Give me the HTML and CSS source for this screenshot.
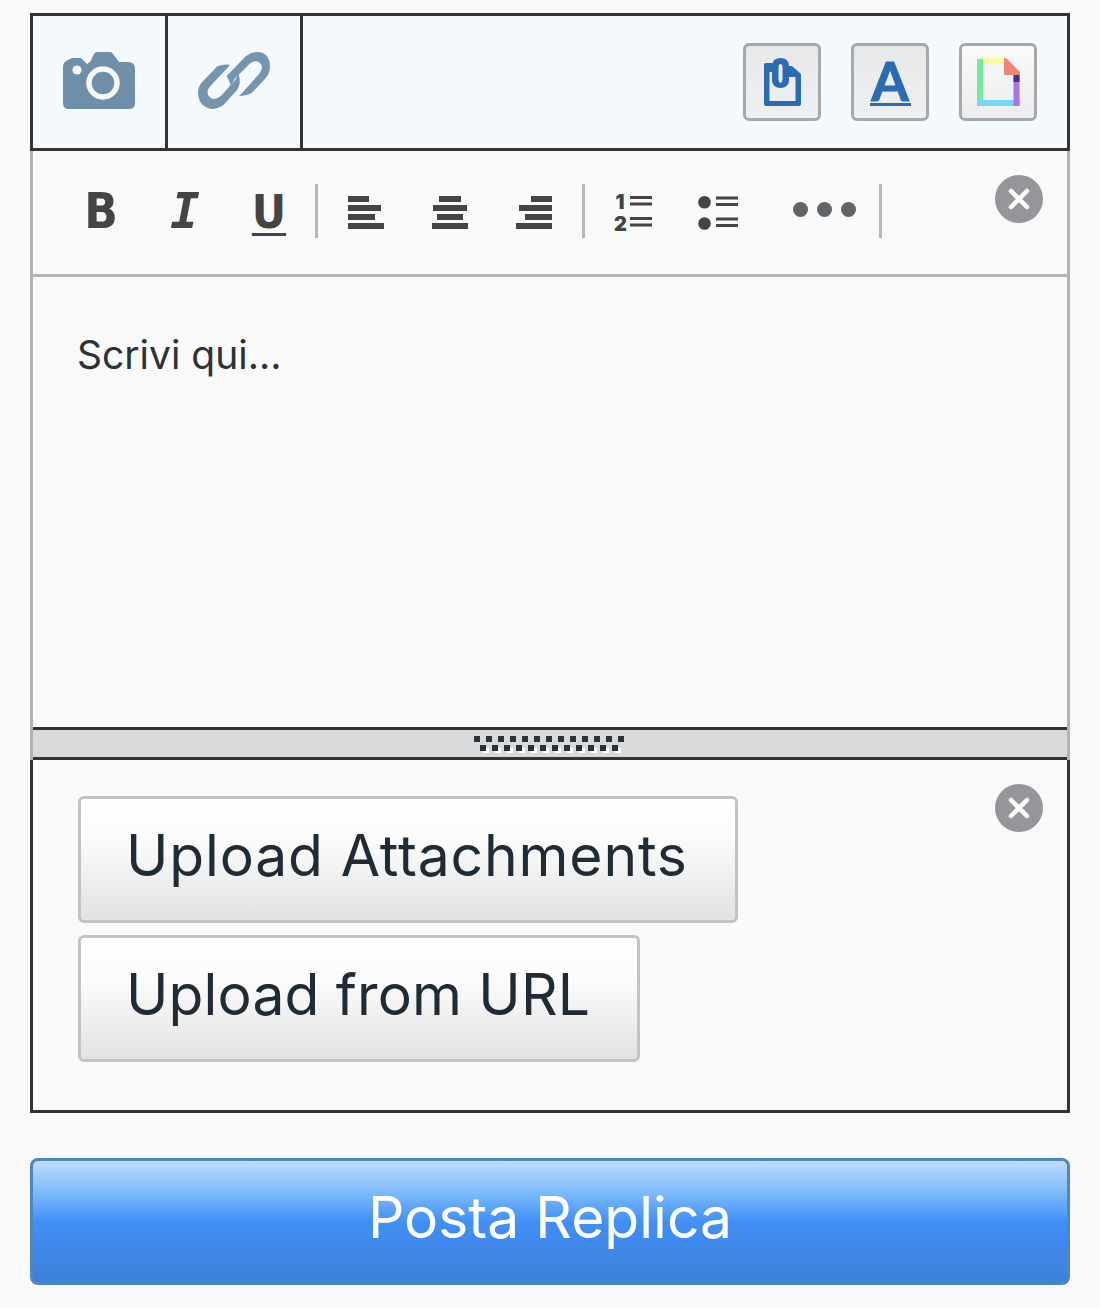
FILE: index.html
```html
<!DOCTYPE html>
<html lang="it">
<head>
<meta charset="utf-8">
<title>Posta Replica</title>
<link rel="stylesheet" href="styles.css">
</head>
<body>
<main class="page">
  <section class="tabs">
    <div class="tab">
      <svg class="ico-camera" viewBox="0 0 72 57"><path fill="#6f8fa8" fill-rule="evenodd" d="M9 6h9l3 3 3 3 3-2 4-8q1-2 3-2h13q2 0 3 2l6 8h9q7 0 7 7v34q0 6-6 6H6q-6 0-6-6V15q0-5 5-7z"/><circle cx="40" cy="31" r="14" fill="none" stroke="#f4f9fd" stroke-width="5.5"/><circle cx="14" cy="18" r="4.6" fill="#f4f9fd"/></svg>
    </div>
    <div class="tab">
      <svg class="ico-link" viewBox="534 156 216 171"><path fill="#7695ad" d="M620 228 678 168q20-15 45-11 27 8 27 44 0 18-15 36l-40 42q-18 10-38 10l22-24 40-45q14-20 0-32-14-10-30 3l-45 45q-6 14-12 20-4-14-12-28z"/><path fill="#7695ad" d="M630 194q-22-2-38 5l-48 50q-10 12-10 31 2 40 40 47 20 0 36-12l42-46q12-22 5-42l-4-10q0 14-8 24l-42 46q-20 18-34 4-14-14 2-33l42-44q8-8 17-20z"/></svg>
    </div>
    <div class="tab-tools">
      <button class="tool" type="button">
        <svg class="ico-clip" viewBox="0 0 37 48"><path fill="#2b6cb0" fill-rule="evenodd" d="M2 5h6V7q1-7 8.500-7T25 7v1h3l9 8v30q0 2-2 2H2q-2 0-2-2V7q0-2 2-2zM5.500 14v29h26V19H25v4q-1 7-8.500 7T8 23v-9zM14.500 8v14q.5 3 2 3t2-3V8q-.5-2-2-2t-2 2z"/></svg>
      </button>
      <button class="tool" type="button"><span class="glyph-a">A</span></button>
      <button class="tool tool-light" type="button">
        <svg class="ico-doc" viewBox="0 0 43 48">
          <path d="M3 3h27" stroke="#fdfba0" stroke-width="6" fill="none"/>
          <path d="M3 1v46" stroke="#73e9a0" stroke-width="6" fill="none"/>
          <path d="M0 45h43" stroke="#76d8f6" stroke-width="6" fill="none"/>
          <path d="M39.500 16v32" stroke="#a872ee" stroke-width="6" fill="none"/>
          <path d="M39.500 16v8" stroke="#4a2f90" stroke-width="6" fill="none"/>
          <path d="M27 0h2l14 14v3H27z" fill="#ea8878"/>
        </svg>
      </button>
    </div>
  </section>

  <section class="editor">
    <div class="format-bar">
      <span class="fmt glyph-b">B</span>
      <span class="fmt glyph-i">I</span>
      <span class="fmt glyph-u">U</span>
      <i class="sep sep-first"></i>
      <span class="fmt"><svg class="ico-align" viewBox="0 0 36 33"><path fill="#444" d="M0 0h21v6H0zM0 9h33v6H0zM0 18h27v6H0zM0 27h36v6H0z"/></svg></span>
      <span class="fmt"><svg class="ico-align" viewBox="0 0 36 33"><path fill="#444" d="M7 0h22v6H7zM1 9h34v6H1zM5 18h26v6H5zM0 27h36v6H0z"/></svg></span>
      <span class="fmt"><svg class="ico-align" viewBox="0 0 36 33"><path fill="#444" d="M15 0h21v6H15zM3 9h33v6H3zM9 18h27v6H9zM0 27h36v6H0z"/></svg></span>
      <i class="sep"></i>
      <span class="fmt list-fmt">
        <span class="list-nums"><b>1</b><b>2</b></span>
        <svg class="ico-lines" viewBox="0 0 22 31"><path fill="#444" d="M0 0h22v3H0zM0 6.500h22v3H0zM0 21h22v3H0zM0 27.500h22v3H0z"/></svg>
      </span>
      <span class="fmt list-fmt">
        <svg class="ico-bul" viewBox="0 0 40 34"><circle cx="6.500" cy="6.300" r="6.300" fill="#444"/><circle cx="6.500" cy="27.500" r="6.300" fill="#444"/><path fill="#444" d="M18 .5h22v3H18zM18 7h22v3H18zM18 21.500h22v3H18zM18 28h22v3H18z"/></svg>
      </span>
      <span class="fmt more"><i></i><i></i><i></i></span>
      <i class="sep sep-last"></i>
      <button class="close close-a" type="button" aria-label="Chiudi"><svg viewBox="0 0 22 22"><path d="M3 3l16 16M19 3L3 19" stroke="#fff" stroke-width="4.500" stroke-linecap="round"/></svg></button>
    </div>
    <div class="text-area">Scrivi qui...</div>
    <div class="resizer">
      <svg class="grip" width="152" height="18" viewBox="0 0 152 18">
        <defs>
          <pattern id="gripa" width="12" height="9" patternUnits="userSpaceOnUse"><rect width="6" height="6" fill="#2b3238"/></pattern>
          <pattern id="gripb" width="12" height="9" patternUnits="userSpaceOnUse"><rect width="6" height="6" fill="#fff"/></pattern>
        </defs>
        <rect x="3" y="3" width="150" height="6" fill="url(#gripb)"/>
        <g fill="#fff"><rect x="9" y="12" width="6" height="5"/><rect x="21" y="12" width="6" height="5"/><rect x="33" y="12" width="6" height="5"/><rect x="45" y="12" width="6" height="5"/><rect x="57" y="12" width="6" height="5"/><rect x="69" y="12" width="6" height="5"/><rect x="81" y="12" width="6" height="5"/><rect x="93" y="12" width="6" height="5"/><rect x="105" y="12" width="6" height="5"/><rect x="117" y="12" width="6" height="5"/><rect x="129" y="12" width="6" height="5"/><rect x="141" y="12" width="6" height="5"/></g>
        <rect x="0" y="0" width="156" height="6" fill="url(#gripa)"/>
        <g fill="#2b3238"><rect x="6" y="9" width="6" height="6"/><rect x="18" y="9" width="6" height="6"/><rect x="30" y="9" width="6" height="6"/><rect x="42" y="9" width="6" height="6"/><rect x="54" y="9" width="6" height="6"/><rect x="66" y="9" width="6" height="6"/><rect x="78" y="9" width="6" height="6"/><rect x="90" y="9" width="6" height="6"/><rect x="102" y="9" width="6" height="6"/><rect x="114" y="9" width="6" height="6"/><rect x="126" y="9" width="6" height="6"/><rect x="138" y="9" width="6" height="6"/></g>
      </svg>
    </div>
  </section>

  <section class="attachments">
    <button class="upload upload-wide" type="button">Upload Attachments</button>
    <button class="upload upload-url" type="button">Upload from URL</button>
    <button class="close close-b" type="button" aria-label="Chiudi"><svg viewBox="0 0 22 22"><path d="M3 3l16 16M19 3L3 19" stroke="#fff" stroke-width="4.500" stroke-linecap="round"/></svg></button>
  </section>

  <button class="submit" type="button">Posta Replica</button>
</main>
</body>
</html>
```

FILE: styles.css
```css
* { box-sizing: border-box; }
html, body { margin: 0; background: #f9f9f9; }
.page {
  width: 1100px;
  height: 1308px;
  padding: 13px 30px 0;
  display: flex;
  flex-direction: column;
  font-family: "Inter", "Liberation Sans", sans-serif;
  color: #212b36;
}
button { font-family: inherit; margin: 0; padding: 0; cursor: pointer; }

.tabs {
  height: 138px;
  flex: none;
  display: flex;
  background: #f4f9fd;
  border: 3px solid #333;
}
.tab {
  width: 135px;
  border-right: 3px solid #333;
  display: flex;
  align-items: center;
  justify-content: center;
  padding-bottom: 4px;
}
.ico-camera, .ico-link { width: 72px; height: 57px; display: block; }
.tab-tools {
  flex: 1;
  display: flex;
  justify-content: flex-end;
  align-items: center;
  gap: 30px;
  padding-right: 30px;
}
.tool {
  width: 78px;
  height: 78px;
  border: 3px solid #a6a9ac;
  border-radius: 6px;
  background: linear-gradient(#e6e8ea, #eef0f2);
  display: flex;
  align-items: center;
  justify-content: center;
}
.tool-light { background: linear-gradient(#fafafa, #ececee); }
.ico-clip { width: 37px; height: 48px; display: block; }
.ico-doc { width: 43px; height: 48px; display: block; filter: blur(0.6px); }
.glyph-a {
  font-family: "Lato", sans-serif;
  font-weight: 700;
  font-size: 54px;
  line-height: 44px;
  color: #2b6cb0;
  -webkit-text-stroke: 1px #2b6cb0;
  border-bottom: 3px solid #2b6cb0;
  padding: 0 1px;
  width: 41px;
  height: 47px;
  display: block;
  text-align: center;
}

.editor {
  height: 609px;
  flex: none;
  display: flex;
  flex-direction: column;
  border-left: 3px solid #b1b3b5;
  border-right: 3px solid #b1b3b5;
}
.format-bar {
  position: relative;
  height: 126px;
  flex: none;
  border-bottom: 3px solid #b1b3b5;
  padding: 33px 0 0 26px;
  display: flex;
  align-items: flex-start;
}
.fmt {
  width: 84px;
  height: 54px;
  display: flex;
  align-items: center;
  justify-content: center;
  color: #444;
  font-family: "DejaVu Sans", sans-serif;
  font-stretch: condensed;
  font-weight: 700;
  font-size: 49px;
  line-height: 1;
}
.glyph-i { font-family: "DejaVu Sans Mono", monospace; font-style: italic; }
.glyph-u {
  text-decoration: underline;
  text-decoration-thickness: 3px;
  text-underline-offset: 5px;
  font-size: 47px;
}
.sep { width: 3px; height: 54px; background: #b6b6b6; margin: 0 6px; flex: none; }
.sep-first { margin-left: 4px; }
.sep-last { margin-left: 13px; }
.ico-align { width: 36px; height: 33px; display: block; margin-top: 3px; }
.list-fmt { gap: 4px; }
.list-nums {
  display: flex;
  flex-direction: column;
  align-items: flex-end;
  font-family: "Inter", sans-serif;
  font-size: 20px;
  line-height: 22px;
  margin-top: 3px;
}
.list-nums b { display: block; width: 12px; text-align: center; }
.ico-lines { width: 22px; height: 31px; display: block; margin-top: 1px; }
.ico-bul { width: 40px; height: 34px; display: block; margin-top: 3px; margin-left: 2px; }
.more { gap: 9px; margin-left: 23px; margin-top: -2px; }
.more i { width: 15px; height: 15px; border-radius: 50%; background: #5e6468; display: block; }
.close {
  position: absolute;
  width: 48px;
  height: 48px;
  border: 0;
  border-radius: 50%;
  background: #959699;
  display: flex;
  align-items: center;
  justify-content: center;
}
.close svg { width: 22px; height: 22px; display: block; }
.close-a { top: 24px; right: 24px; }
.close-b { top: 24px; right: 24px; }
.text-area {
  flex: 1;
  padding: 54px 44px;
  font-family: "Inter", sans-serif;
  font-size: 39px;
  font-weight: 400;
  line-height: 48px;
  color: #2b3238;
}

.resizer {
  height: 33px;
  flex: none;
  background: #d8d9da;
  border-top: 3px solid #333;
  border-bottom: 3px solid #333;
  display: flex;
  justify-content: center;
  align-items: flex-start;
}
.grip { display: block; margin-top: 6px; }

.attachments {
  position: relative;
  height: 353px;
  flex: none;
  padding: 36px 45px 0;
  border: 3px solid #333;
  border-top: 0;
  display: flex;
  flex-direction: column;
  align-items: flex-start;
  gap: 12px;
}
.upload {
  height: 127px;
  padding: 0 47px 8px 45px;
  border: 3px solid #c0c4c6;
  border-radius: 6px;
  background: linear-gradient(#fff, #fbfbfb 35%, #e2e2e2);
  color: #212b36;
  font-size: 57px;
  font-weight: 400;
  line-height: 1;
}
.upload-wide { letter-spacing: 0.85px; }
.upload-url { letter-spacing: 0.15px; }

.submit {
  margin-top: 45px;
  width: 1040px;
  height: 127px;
  flex: none;
  padding-bottom: 8px;
  border: 3px solid #4f86bb;
  border-radius: 8px;
  background: linear-gradient(#bcdcfd, #80bcfb 25%, #4190f7 50%, #3f88ea 70%, #3d80d9);
  color: #fff;
  font-size: 57px;
  font-weight: 400;
  line-height: 1;
}
```
